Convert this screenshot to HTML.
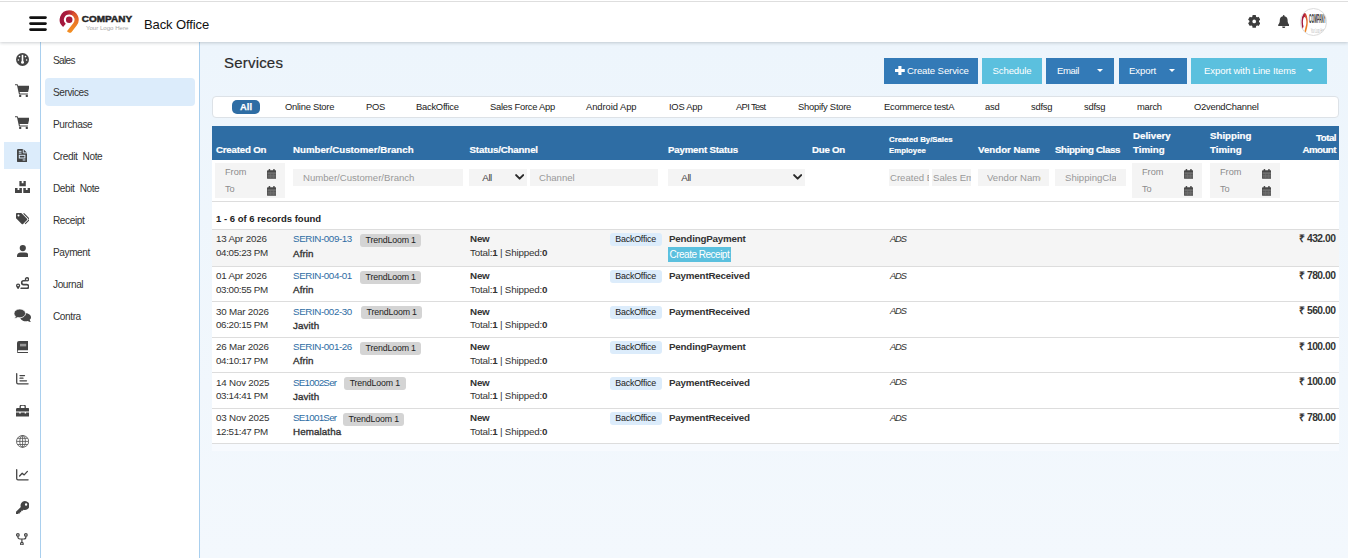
<!DOCTYPE html>
<html lang="en">
<head>
<meta charset="utf-8">
<title>Back Office - Services</title>
<style>
*{box-sizing:border-box;margin:0;padding:0}
html,body{width:1348px;height:558px;overflow:hidden}
body{font-family:"Liberation Sans",sans-serif;font-size:11px;color:#333;background:#eef5fc;position:relative}
.abs{position:absolute}
/* header */
#hdr{position:absolute;left:0;top:0;width:1348px;height:42px;background:#fff;box-shadow:0 1px 3px rgba(90,100,110,.3);z-index:5}
#hdr .title{position:absolute;left:144px;top:16.500px;font-size:13px;color:#111;letter-spacing:-.1px;line-height:16px;white-space:nowrap}
#burger{position:absolute;left:28.600px;top:15.800px;width:18px;height:16px}
#logo{position:absolute;left:58px;top:6px;width:80px;height:28px}
/* icon bar */
#ibar{position:absolute;left:0;top:42px;width:41px;height:516px;background:#fff;border-right:1px solid #a9cfee}
#ibar .ic{position:absolute;left:0;width:40px;height:32px}
#ibar .ic.on{background:#dcecfb;left:4px;width:36px}
#ibar svg{position:absolute;fill:#444}
/* sub menu */
#smenu{position:absolute;left:41px;top:42px;width:159px;height:516px;background:#fff;border-right:1px solid #a9cfee}
#smenu .it{position:absolute;left:12px;height:16px;line-height:16px;font-size:10.100px;color:#333;letter-spacing:-.42px;word-spacing:2.800px;white-space:nowrap}
#smenu .sel{position:absolute;left:4px;top:36px;width:150px;height:28px;background:#dcecfb;border-radius:4px}
/* main */
#main{position:absolute;left:200px;top:42px;width:1148px;height:516px;background:linear-gradient(#edf5fc,#f3f8fd)}
h1{position:absolute;left:224px;top:52.200px;font-size:15px;font-weight:normal;color:#2b2b2b;line-height:22px;letter-spacing:.2px;white-space:nowrap;-webkit-text-stroke:.2px #2b2b2b}
.btn{position:absolute;top:58px;height:25.800px;color:#fff;font-size:9.600px;letter-spacing:-.12px;line-height:26.500px;white-space:nowrap;text-align:center}
.btn.d{background:#337ab7}
.btn.l{background:#5bc0de}
.btn .car{position:absolute;top:11.200px;width:0;height:0;border-left:3px solid transparent;border-right:3px solid transparent;border-top:3.500px solid #fff}
/* tabs */
#tabs{position:absolute;left:212px;top:96px;width:1126.500px;height:22px;background:#fff;border:1px solid #dde2e7;border-radius:4px}
#tabs span{position:absolute;top:1.800px;letter-spacing:-.25px;font-size:9.400px;line-height:16px;color:#222;white-space:nowrap}
#tabs .all{left:19px;top:3px;width:28px;letter-spacing:0;-webkit-text-stroke:.25px #fff;height:14px;line-height:14px;background:#2e6da4;border-radius:5px;color:#fff;font-weight:bold;text-align:center}
/* table */
#tbl{position:absolute;left:212px;top:126px;width:1127px;height:318px;background:#fff}
#thead{position:absolute;left:0;top:0;width:1127px;height:34px;background:#2e6da4}
#thead span{position:absolute;color:#fff;font-weight:bold;-webkit-text-stroke:.2px #fff;font-size:9.7px;line-height:13px;white-space:nowrap}
.fl{position:absolute;background:#f4f4f4;color:#999;font-size:9.600px;white-space:nowrap;overflow:hidden}
.fl i{font-style:normal;position:absolute;font-size:9.200px}.fl.ft{color:#8c8c8c}
.hr{position:absolute;left:0;width:1127px;height:1px;background:#ddd}
.row{position:absolute;left:0;width:1127px}
.row span{position:absolute;white-space:nowrap;letter-spacing:-.2px;font-size:9.800px;line-height:14px;color:#333}
.row .lnk{color:#2e6da4;letter-spacing:-.4px}.row .lnk.s{letter-spacing:-.75px}.row .tm{letter-spacing:-.35px}
.row .b{font-weight:bold}
.row .tag{background:#d4d4d4;border-radius:3px;height:12.700px;line-height:12.700px;padding:0 5.500px;color:#222;font-size:8.800px;letter-spacing:-.15px}
.row .ch{background:#dcecfb;border-radius:3px;height:13px;line-height:13px;color:#222;font-size:8.9px;width:52px;text-align:center}
.row .ads{font-style:italic;font-size:9.300px;letter-spacing:-1.1px}
.row .amt{font-weight:bold;right:3.600px;text-align:right;font-size:10.300px;letter-spacing:-.5px}
.row .cr{background:#5bc0de;color:#fff;height:14.800px;line-height:16.400px;padding:0 0 0 1.500px;font-size:10px;letter-spacing:-.5px;width:62.800px;overflow:hidden}

.cal{width:9.400px;height:9.800px;display:block}
.fl span{position:absolute}
.chev{position:absolute;top:5.300px;width:9.300px;height:6.500px}
#thead .sm{font-size:7.8px;line-height:11.100px}
.rec{position:absolute;left:4px;top:85.800px;font-weight:bold;font-size:9.5px;line-height:14px;color:#222;white-space:nowrap}
.row .cu{-webkit-text-stroke:.35px #333;letter-spacing:.1px}
</style>
</head>
<body>
<div id="main"></div>
<div id="hdr"><div style="position:absolute;left:0;top:1px;width:1348px;height:1px;background:#dedede"></div>
  <svg id="burger" viewBox="0 0 18 16"><g stroke="#111" stroke-width="2.6" stroke-linecap="round"><line x1="1.5" y1="1.6" x2="16.5" y2="1.6"/><line x1="1.5" y1="7.6" x2="16.5" y2="7.6"/><line x1="1.5" y1="13.6" x2="16.5" y2="13.6"/></g></svg>
  <svg id="logo" viewBox="0 0 80 28">
    <defs><linearGradient id="lgA" gradientUnits="userSpaceOnUse" x1="3" y1="0" x2="16" y2="0"><stop offset="0" stop-color="#a2173e"/><stop offset=".45" stop-color="#a81b3c"/><stop offset="1" stop-color="#d5492e"/></linearGradient>
    <linearGradient id="lgB" gradientUnits="userSpaceOnUse" x1="0" y1="6" x2="0" y2="27"><stop offset="0" stop-color="#d5492e"/><stop offset=".45" stop-color="#ea7427"/><stop offset="1" stop-color="#f39122"/></linearGradient>
    <clipPath id="lgC"><rect x="0" y="0" width="30" height="26.800"/></clipPath></defs>
    <g fill="none" stroke-width="4.200" clip-path="url(#lgC)"><path d="M13.97 6.84A7.4 7.4 0 0 1 17.03 18.26L10.6 26.5" stroke="url(#lgB)"/><path d="M6.44 19.37A7.4 7.4 0 0 1 11.20 6.30A7.4 7.4 0 0 1 14.90 7.29" stroke="url(#lgA)"/></g>
    <circle cx="11.200" cy="13.700" r="3.250" fill="#a61a3d"/>
    <text x="23.800" y="16.400" font-family="Liberation Sans,sans-serif" font-weight="bold" font-size="9" fill="#262626" stroke="#262626" stroke-width=".45" textLength="50.300" lengthAdjust="spacingAndGlyphs">COMPANY</text>
    <text x="27.900" y="24" font-family="Liberation Sans,sans-serif" font-size="5.300" fill="#a8a8a8" textLength="42.500" lengthAdjust="spacingAndGlyphs">Your Logo Here</text>
  </svg>
  <span class="title">Back Office</span>
<svg style="position:absolute;left:1247.800px;top:15px" width="12.400" height="12.800" viewBox="0 0 13 13" preserveAspectRatio="none"><path d="M5.11 2.22L5.27 0.73L7.73 0.73L7.89 2.22L9.51 3.16L10.88 2.55L12.11 4.68L10.90 5.56L10.90 7.44L12.11 8.32L10.88 10.45L9.51 9.84L7.89 10.78L7.73 12.27L5.27 12.27L5.11 10.78L3.49 9.84L2.12 10.45L0.89 8.32L2.10 7.44L2.10 5.56L0.89 4.68L2.12 2.55L3.49 3.16z" fill="#3d3d3d" stroke="#3d3d3d" stroke-width="1.300" stroke-linejoin="round"/><circle cx="6.500" cy="6.500" r="1.900" fill="#fff"/></svg>
<svg style="position:absolute;left:1277.900px;top:14.800px" width="11.400" height="13" viewBox="0 0 11.400 13"><path fill="#3d3d3d" d="M5.700 0a.8.800 0 0 1 .8.800v.4a3.900 3.900 0 0 1 3.100 3.800c0 2.600.6 3.600 1.400 4.400.3.300.4.600.4.800 0 .5-.4.800-.8.800H.8c-.4 0-.8-.3-.8-.8 0-.2.100-.5.400-.8.800-.8 1.400-1.800 1.400-4.400a3.900 3.900 0 0 1 3.100-3.800V.8a.8.800 0 0 1 .8-.8z"/><path fill="#3d3d3d" d="M4.100 11.600h3.200a1.600 1.600 0 0 1-3.200 0z"/></svg>
<div style="position:absolute;left:1299.500px;top:8px;width:27.500px;height:27.500px;border-radius:50%;border:1px solid #dcdcdc;overflow:hidden;background:#fff"><svg style="position:absolute;left:0;top:0" width="26" height="27" viewBox="0 0 80 28" preserveAspectRatio="none"><g fill="none" stroke-width="4.200"><path d="M13.97 6.84A7.4 7.4 0 0 1 17.03 18.26L10.6 26.5" stroke="url(#lgB)"/><path d="M6.44 19.37A7.4 7.4 0 0 1 11.20 6.30A7.4 7.4 0 0 1 14.90 7.29" stroke="url(#lgA)"/></g><text x="25" y="15" font-family="Liberation Sans,sans-serif" font-weight="bold" font-size="12.500" fill="#2b2b2b" textLength="52" lengthAdjust="spacingAndGlyphs">COMPANY</text><text x="30" y="24.800" font-family="Liberation Sans,sans-serif" font-size="7.500" fill="#b5b5b5" textLength="42" lengthAdjust="spacingAndGlyphs">Your Logo Here</text></svg></div>
</div>
<div id="ibar"><div class="ic on" style="top:100px;height:27px"></div><svg style="left:15.5px;top:10.5px" width="13" height="13" viewBox="0 0 13 13"><circle cx="6.500" cy="6.500" r="6.500"/><g fill="#fff"><rect x="5.700" y="1.800" width="1.600" height="6.500"/><circle cx="6.500" cy="9.300" r="1.500"/><circle cx="2.400" cy="7" r=".8"/><circle cx="10.600" cy="7" r=".8"/><circle cx="3.500" cy="3.600" r=".8"/><circle cx="9.500" cy="3.600" r=".8"/></g></svg>
<svg style="left:14.7px;top:42.2px" width="14.6" height="13.2" viewBox="0 0 14.6 13.2"><path d="M0 .2h2.600l.5 1.500H14.600l-1.500 6.300H4.600l.3 1.400h8v1.100H4L2 1.300H0z"/><circle cx="5.200" cy="12" r="1.200"/><circle cx="11.800" cy="12" r="1.200"/></svg>
<svg style="left:14.7px;top:74.3px" width="14.6" height="13.2" viewBox="0 0 14.6 13.2"><path d="M0 .2h2.600l.5 1.500H14.600l-1.500 6.300H4.600l.3 1.400h8v1.100H4L2 1.300H0z"/><circle cx="5.200" cy="12" r="1.200"/><circle cx="11.800" cy="12" r="1.200"/></svg>
<svg style="left:17.2px;top:106.69999999999999px" width="10.2" height="13.3" viewBox="0 0 10.2 13.3"><path d="M1.200 0H6.300L10.200 3.900V12.100a1.200 1.200 0 0 1-1.200 1.200H1.200A1.200 1.200 0 0 1 0 12.100V1.200A1.200 1.200 0 0 1 1.200 0z"/><path d="M6.300 0v3.900h3.900" fill="none" stroke="#dcecfb" stroke-width=".9"/><g fill="none" stroke="#dcecfb" stroke-width="1"><rect x="2.300" y="6.300" width="5.600" height="2.700"/><path d="M1.800 2.300h2.700M1.800 4.100h2.700M5.700 11h2.700"/></g></svg>
<svg style="left:14.9px;top:138.8px" width="15.2" height="12.4" viewBox="0 0 15.2 12.4"><path d="M4.4 0h2.3000000000000003v2.200h1.800v-2.200h2.3000000000000003v5.3h-6.4z"/><path d="M0 6.9h2.5500000000000003v2.200h1.800v-2.200h2.5500000000000003v5.5h-6.9z"/><path d="M8.3 6.9h2.5500000000000003v2.200h1.800v-2.200h2.5500000000000003v5.5h-6.9z"/></svg>
<svg style="left:15.5px;top:171.2px" width="13.6" height="11.4" viewBox="0 0 13.6 11.4"><path fill-rule="evenodd" d="M0 .9V4.900a1 1 0 0 0 .3.700L5.700 11a1 1 0 0 0 1.400 0l3.900-3.900a1 1 0 0 0 0-1.400L5.600.3A1 1 0 0 0 4.900 0H.9A.9.900 0 0 0 0 .9zM2.500 1.500a1 1 0 1 1 0 2 1 1 0 0 1 0-2z"/><path d="M7.600.3l5.300 5.400a1 1 0 0 1 0 1.400L9.100 11" fill="none" stroke="#444" stroke-width="1.100"/></svg>
<svg style="left:16.6px;top:202.8px" width="11.6" height="12.6" viewBox="0 0 11.6 12.6"><circle cx="5.800" cy="3.100" r="3.100"/><path d="M0 12.600v-1.400a3.800 3.800 0 0 1 3.800-3.800h4a3.800 3.800 0 0 1 3.800 3.800v1.400z"/></svg>
<svg style="left:15.5px;top:234.89999999999998px" width="13.4" height="12.4" viewBox="0 0 13.4 12.4"><g fill="none" stroke="#444"><circle cx="11" cy="2.300" r="1.550" stroke-width="1.400"/><path d="M9.300 3.800H7.600a1.900 1.900 0 0 0 0 3.800h3.200a1.900 1.900 0 0 1 0 3.800H5.200" stroke-width="1.600" stroke-linecap="round"/></g><path fill-rule="evenodd" d="M2.100 6.400a2.100 2.100 0 0 1 2.100 2.100c0 1.400-2.100 3.900-2.100 3.900S0 9.900 0 8.500a2.100 2.100 0 0 1 2.100-2.100zm0 1.300a.8.800 0 1 0 0 1.600.8.800 0 0 0 0-1.600z"/></svg>
<svg style="left:13.5px;top:266.5px" width="17" height="13" viewBox="0 0 17 13"><path d="M11.600 4.200c3 0 5.400 1.800 5.400 4 0 1-.5 1.900-1.300 2.600.2.800.7 1.600 1.200 2.100-1.200 0-2.300-.4-3.100-1-.7.200-1.400.3-2.200.3-3 0-5.400-1.800-5.400-4s2.400-4 5.400-4z"/><path d="M5.800 0c3.200 0 5.800 2 5.800 4.400S9 8.800 5.800 8.800c-.8 0-1.500-.1-2.200-.3-.9.700-2.100 1.100-3.400 1.100.6-.6 1.100-1.400 1.300-2.300C.6 6.500 0 5.500 0 4.400 0 2 2.600 0 5.800 0z" stroke="#fff" stroke-width=".8"/></svg>
<svg style="left:16.6px;top:298.9px" width="11.6" height="12.4" viewBox="0 0 11.6 12.4"><path d="M2 0h8.600a1 1 0 0 1 1 1v10.400a1 1 0 0 1-1 1H2a2 2 0 0 1-2-2V2a2 2 0 0 1 2-2z"/><rect x="3" y="2.800" width="6.200" height="2.600" fill="#999"/><path d="M1.500 9.300h10.100v1.700H1.500a.85.850 0 0 1 0-1.700z" fill="#fff"/></svg>
<svg style="left:15.8px;top:331.3px" width="12.8" height="11.6" viewBox="0 0 12.8 11.6"><g fill="none" stroke="#444" stroke-width="1.300" stroke-linecap="round"><path d="M.7.700v8.800a1.300 1.300 0 0 0 1.300 1.300h10.100"/><path d="M4 2.600h4.500M4 5.200h3M4 7.800h6.500"/></g></svg>
<svg style="left:15.5px;top:363.2px" width="13.4" height="11.6" viewBox="0 0 13.4 11.6"><path d="M4.200 3V1.500A1.500 1.500 0 0 1 5.700 0h2A1.500 1.500 0 0 1 9.200 1.500V3" fill="none" stroke="#444" stroke-width="1.300"/><path d="M1.400 3h10.600a1.400 1.400 0 0 1 1.400 1.400V6.400H0V4.400A1.400 1.400 0 0 1 1.400 3zM0 7.600h3.300v1h1.400v-1h4v1h1.400v-1h3.300v4H0z"/></svg>
<svg style="left:15.5px;top:393px" width="13.2" height="12.8" viewBox="0 0 13.2 12.8"><g fill="none" stroke="#555" stroke-width=".85"><ellipse cx="6.600" cy="6.400" rx="6.100" ry="5.900"/><ellipse cx="6.600" cy="6.400" rx="2.800" ry="5.900"/><path d="M6.600.5v11.800M.5 6.400h12.200M1.500 3.300h10.200M1.500 9.500h10.200"/></g></svg>
<svg style="left:15.8px;top:427.2px" width="12.8" height="11.6" viewBox="0 0 12.8 11.6"><g fill="none" stroke="#444" stroke-width="1.300" stroke-linecap="round" stroke-linejoin="round"><path d="M.7.700v8.800a1.300 1.300 0 0 0 1.300 1.300h10.100"/><path d="M3.600 7l2.600-2.800 2 1.700 3.200-3.500"/></g></svg>
<svg style="left:15.5px;top:458.5px" width="13.4" height="13" viewBox="0 0 13.4 13"><path fill-rule="evenodd" d="M8.900 0a4.500 4.500 0 1 1-1.300 8.800L6.600 9.800H5.200v1.400H3.800v1.400H2.400L1.800 13H0v-2.200L4.800 6A4.500 4.500 0 0 1 8.900 0zm1.200 2.300a1.200 1.200 0 1 0 0 2.400 1.200 1.200 0 0 0 0-2.400z"/></svg>
<svg style="left:16.4px;top:490.70000000000005px" width="11.8" height="12.6" viewBox="0 0 11.8 12.6"><g fill="none" stroke="#444" stroke-width="1.200"><circle cx="1.900" cy="1.900" r="1.300"/><circle cx="9.900" cy="1.900" r="1.300"/><circle cx="5.900" cy="10.700" r="1.300"/><path d="M1.900 3.200v.8a2 2 0 0 0 2 2h4a2 2 0 0 0 2-2v-.8M5.900 6v3.400"/></g></svg></div>
<div id="smenu">
  <div class="sel"></div>
  <span class="it" style="top:10.6px;letter-spacing:-.7px">Sales</span>
  <span class="it" style="top:42.6px">Services</span>
  <span class="it" style="top:74.6px">Purchase</span>
  <span class="it" style="top:106.6px">Credit Note</span>
  <span class="it" style="top:138.6px">Debit Note</span>
  <span class="it" style="top:170.6px">Receipt</span>
  <span class="it" style="top:202.6px">Payment</span>
  <span class="it" style="top:234.6px">Journal</span>
  <span class="it" style="top:266.6px">Contra</span>
</div>
<h1>Services</h1>
<div class="btn d" style="left:884px;width:94px"><svg style="position:absolute;left:10.800px;top:8px" width="9.800" height="9" viewBox="0 0 10 10" preserveAspectRatio="none"><path d="M3.400 0h3.200v3.400H10v3.200H6.600V10H3.400V6.600H0V3.400h3.400z" fill="#fff"/></svg><span style="position:absolute;left:23px;top:0">Create Service</span></div>
<div class="btn l" style="left:982px;width:60px">Schedule</div>
<div class="btn d" style="left:1046px;width:68px"><span style="position:absolute;left:11px;top:0;letter-spacing:-.4px">Email</span><i class="car" style="left:51px"></i></div>
<div class="btn d" style="left:1119px;width:68px"><span style="position:absolute;left:10px;top:0">Export</span><i class="car" style="left:50px"></i></div>
<div class="btn l" style="left:1191px;width:136px"><span style="position:absolute;left:13px;top:0">Export with Line Items</span><i class="car" style="left:116px"></i></div>
<div id="tabs"><span class="all">All</span><span style="left:72px">Online Store</span><span style="left:153px">POS</span><span style="left:203px">BackOffice</span><span style="left:277px">Sales Force App</span><span style="left:373px;letter-spacing:-.05px">Android App</span><span style="left:456px">IOS App</span><span style="left:523px;letter-spacing:-.65px">API Test</span><span style="left:585px">Shopify Store</span><span style="left:671px">Ecommerce testA</span><span style="left:772px">asd</span><span style="left:818px">sdfsg</span><span style="left:871px">sdfsg</span><span style="left:924px">march</span><span style="left:981px">O2vendChannel</span></div>
<div style="position:absolute;left:212px;top:444px;width:1127px;height:7px;background:#f7fafe"></div>
<div id="tbl">
<div id="thead">
<span style="left:4px;top:17px;letter-spacing:-.2px">Created On</span>
<span style="left:81px;top:17px">Number/Customer/Branch</span>
<span style="left:257.500px;top:17px;letter-spacing:-.15px">Status/Channel</span>
<span style="left:456px;top:17px;letter-spacing:-.2px">Payment Status</span>
<span style="left:600px;top:17px;letter-spacing:-.25px">Due On</span>
<span class="sm" style="left:677px;top:8px">Created By/Sales<br>Employee</span>
<span style="left:766px;top:17px">Vendor Name</span>
<span style="left:843px;top:17px;letter-spacing:-.35px">Shipping Class</span>
<span style="left:921px;top:3px;line-height:14px">Delivery<br>Timing</span>
<span style="left:998px;top:3px;line-height:14px">Shipping<br>Timing</span>
<span style="right:3px;top:6px;line-height:12.300px;text-align:right;letter-spacing:-.5px">Total<br>Amount</span>
</div>
<div class="fl ft" style="left:3px;top:37px;width:70px;height:35px"><i style="left:10px;top:4px">From</i><i style="left:10px;top:21px">To</i><span style="left:52px;top:6px"><svg class="cal" viewBox="0 0 9.400 9.800"><path d="M.9 1.300h7.600a.9.900 0 0 1 .9.900v6.700a.9.900 0 0 1-.9.900H.9a.9.900 0 0 1-.9-.9V2.200a.9.900 0 0 1 .9-.9z" fill="#484848"/><rect x="1.700" y="0" width="1.500" height="2.200" rx=".5" fill="#484848"/><rect x="6.200" y="0" width="1.500" height="2.200" rx=".5" fill="#484848"/><g fill="#a9a9a9"><rect x=".5" y="3.700" width="8.400" height=".7"/><rect x=".5" y="5.800" width="8.400" height=".55"/><rect x=".5" y="7.700" width="8.400" height=".55"/></g><g fill="#777"><rect x="3" y="4.400" width=".45" height="4.800"/><rect x="5.950" y="4.400" width=".45" height="4.800"/></g></svg></span><span style="left:52px;top:23px"><svg class="cal" viewBox="0 0 9.400 9.800"><path d="M.9 1.300h7.600a.9.900 0 0 1 .9.900v6.700a.9.900 0 0 1-.9.900H.9a.9.900 0 0 1-.9-.9V2.200a.9.900 0 0 1 .9-.9z" fill="#484848"/><rect x="1.700" y="0" width="1.500" height="2.200" rx=".5" fill="#484848"/><rect x="6.200" y="0" width="1.500" height="2.200" rx=".5" fill="#484848"/><g fill="#a9a9a9"><rect x=".5" y="3.700" width="8.400" height=".7"/><rect x=".5" y="5.800" width="8.400" height=".55"/><rect x=".5" y="7.700" width="8.400" height=".55"/></g><g fill="#777"><rect x="3" y="4.400" width=".45" height="4.800"/><rect x="5.950" y="4.400" width=".45" height="4.800"/></g></svg></span></div>
<div class="fl" style="left:81px;top:43px;width:170px;height:17px;line-height:17px;padding-left:10px">Number/Customer/Branch</div>
<div class="fl" style="left:257px;top:43px;width:58px;height:17px;line-height:17px;padding-left:13.300px;color:#444;font-size:9.800px;letter-spacing:-.45px">All<svg class="chev" style="left:45.500px" viewBox="0 0 10 7"><path d="M1.200 1.200L5 5l3.800-3.800" fill="none" stroke="#2b2b2b" stroke-width="2.200" stroke-linecap="round" stroke-linejoin="round"/></svg></div>
<div class="fl" style="left:318px;top:43px;width:128px;height:17px;line-height:17px;padding-left:9px">Channel</div>
<div class="fl" style="left:456px;top:43px;width:137px;height:17px;line-height:17px;padding-left:13.300px;color:#444;font-size:9.800px;letter-spacing:-.45px">All<svg class="chev" style="left:124.500px" viewBox="0 0 10 7"><path d="M1.200 1.200L5 5l3.800-3.800" fill="none" stroke="#2b2b2b" stroke-width="2.200" stroke-linecap="round" stroke-linejoin="round"/></svg></div>
<div class="fl" style="left:677px;top:43px;width:40px;height:17px;line-height:17px;padding-left:1px">Created By</div>
<div class="fl" style="left:720px;top:43px;width:39px;height:17px;line-height:17px;padding-left:1px">Sales Employee</div>
<div class="fl" style="left:766px;top:43px;width:71px;height:17px;line-height:17px;padding-left:9px"><div style="width:54px;overflow:hidden">Vendor Name</div></div>
<div class="fl" style="left:843px;top:43px;width:71px;height:17px;line-height:17px;padding-left:10px"><div style="width:51px;overflow:hidden">ShippingClass</div></div>
<div class="fl ft" style="left:920px;top:37px;width:70px;height:35px"><i style="left:10px;top:4px">From</i><i style="left:10px;top:21px">To</i><span style="left:52px;top:6px"><svg class="cal" viewBox="0 0 9.400 9.800"><path d="M.9 1.300h7.600a.9.900 0 0 1 .9.900v6.700a.9.900 0 0 1-.9.900H.9a.9.900 0 0 1-.9-.9V2.200a.9.900 0 0 1 .9-.9z" fill="#484848"/><rect x="1.700" y="0" width="1.500" height="2.200" rx=".5" fill="#484848"/><rect x="6.200" y="0" width="1.500" height="2.200" rx=".5" fill="#484848"/><g fill="#a9a9a9"><rect x=".5" y="3.700" width="8.400" height=".7"/><rect x=".5" y="5.800" width="8.400" height=".55"/><rect x=".5" y="7.700" width="8.400" height=".55"/></g><g fill="#777"><rect x="3" y="4.400" width=".45" height="4.800"/><rect x="5.950" y="4.400" width=".45" height="4.800"/></g></svg></span><span style="left:52px;top:23px"><svg class="cal" viewBox="0 0 9.400 9.800"><path d="M.9 1.300h7.600a.9.900 0 0 1 .9.900v6.700a.9.900 0 0 1-.9.900H.9a.9.900 0 0 1-.9-.9V2.200a.9.900 0 0 1 .9-.9z" fill="#484848"/><rect x="1.700" y="0" width="1.500" height="2.200" rx=".5" fill="#484848"/><rect x="6.200" y="0" width="1.500" height="2.200" rx=".5" fill="#484848"/><g fill="#a9a9a9"><rect x=".5" y="3.700" width="8.400" height=".7"/><rect x=".5" y="5.800" width="8.400" height=".55"/><rect x=".5" y="7.700" width="8.400" height=".55"/></g><g fill="#777"><rect x="3" y="4.400" width=".45" height="4.800"/><rect x="5.950" y="4.400" width=".45" height="4.800"/></g></svg></span></div>
<div class="fl ft" style="left:998px;top:37px;width:70px;height:35px"><i style="left:10px;top:4px">From</i><i style="left:10px;top:21px">To</i><span style="left:52px;top:6px"><svg class="cal" viewBox="0 0 9.400 9.800"><path d="M.9 1.300h7.600a.9.900 0 0 1 .9.900v6.700a.9.900 0 0 1-.9.900H.9a.9.900 0 0 1-.9-.9V2.200a.9.900 0 0 1 .9-.9z" fill="#484848"/><rect x="1.700" y="0" width="1.500" height="2.200" rx=".5" fill="#484848"/><rect x="6.200" y="0" width="1.500" height="2.200" rx=".5" fill="#484848"/><g fill="#a9a9a9"><rect x=".5" y="3.700" width="8.400" height=".7"/><rect x=".5" y="5.800" width="8.400" height=".55"/><rect x=".5" y="7.700" width="8.400" height=".55"/></g><g fill="#777"><rect x="3" y="4.400" width=".45" height="4.800"/><rect x="5.950" y="4.400" width=".45" height="4.800"/></g></svg></span><span style="left:52px;top:23px"><svg class="cal" viewBox="0 0 9.400 9.800"><path d="M.9 1.300h7.600a.9.900 0 0 1 .9.900v6.700a.9.900 0 0 1-.9.900H.9a.9.900 0 0 1-.9-.9V2.200a.9.900 0 0 1 .9-.9z" fill="#484848"/><rect x="1.700" y="0" width="1.500" height="2.200" rx=".5" fill="#484848"/><rect x="6.200" y="0" width="1.500" height="2.200" rx=".5" fill="#484848"/><g fill="#a9a9a9"><rect x=".5" y="3.700" width="8.400" height=".7"/><rect x=".5" y="5.800" width="8.400" height=".55"/><rect x=".5" y="7.700" width="8.400" height=".55"/></g><g fill="#777"><rect x="3" y="4.400" width=".45" height="4.800"/><rect x="5.950" y="4.400" width=".45" height="4.800"/></g></svg></span></div>
<div class="hr" style="top:75px"></div>
<span class="rec">1 - 6 of 6 records found</span>
<div class="hr" style="top:103px"></div>
<!--rows-->
<div class="row" style="top:104px;height:35.8px;background:#f5f5f5;">
<span style="left:4px;top:2.4px">13 Apr 2026</span><span class="tm" style="left:4px;top:16px">04:05:23 PM</span>
<span class="lnk" style="left:81px;top:2.4px">SERIN-009-13</span><span class="tag" style="left:148px;top:4.1px">TrendLoom 1</span><span class="cu" style="left:81px;top:16.5px">Afrin</span>
<span class="b" style="left:258px;top:2.4px">New</span><span style="left:258px;top:16px">Total:<b>1</b> | Shipped:<b>0</b></span>
<span class="ch" style="left:397.600px;top:3.3px">BackOffice</span><span class="b" style="left:457px;top:2.4px">PendingPayment</span>
<span class="cr" style="left:456px;top:17.3px">Create Receipt</span>
<span class="ads" style="left:678px;top:1.9px">ADS</span><span class="amt" style="top:1.9px">₹ 432.00</span>
<div class="hr" style="top:35.8px"></div></div>
<div class="row" style="top:140.8px;height:34.5px;">
<span style="left:4px;top:2.4px">01 Apr 2026</span><span class="tm" style="left:4px;top:16px">03:00:55 PM</span>
<span class="lnk" style="left:81px;top:2.4px">SERIN-004-01</span><span class="tag" style="left:148px;top:4.1px">TrendLoom 1</span><span class="cu" style="left:81px;top:16.5px">Afrin</span>
<span class="b" style="left:258px;top:2.4px">New</span><span style="left:258px;top:16px">Total:<b>1</b> | Shipped:<b>0</b></span>
<span class="ch" style="left:397.600px;top:3.3px">BackOffice</span><span class="b" style="left:457px;top:2.4px">PaymentReceived</span>
<span class="ads" style="left:678px;top:1.9px">ADS</span><span class="amt" style="top:1.9px">₹ 780.00</span>
<div class="hr" style="top:34.5px"></div></div>
<div class="row" style="top:176.3px;height:34.5px;">
<span style="left:4px;top:2.4px">30 Mar 2026</span><span class="tm" style="left:4px;top:16px">06:20:15 PM</span>
<span class="lnk" style="left:81px;top:2.4px">SERIN-002-30</span><span class="tag" style="left:149px;top:4.1px">TrendLoom 1</span><span class="cu" style="left:81px;top:16.5px">Javith</span>
<span class="b" style="left:258px;top:2.4px">New</span><span style="left:258px;top:16px">Total:<b>1</b> | Shipped:<b>0</b></span>
<span class="ch" style="left:397.600px;top:3.3px">BackOffice</span><span class="b" style="left:457px;top:2.4px">PaymentReceived</span>
<span class="ads" style="left:678px;top:1.9px">ADS</span><span class="amt" style="top:1.9px">₹ 560.00</span>
<div class="hr" style="top:34.5px"></div></div>
<div class="row" style="top:211.8px;height:34.5px;">
<span style="left:4px;top:2.4px">26 Mar 2026</span><span class="tm" style="left:4px;top:16px">04:10:17 PM</span>
<span class="lnk" style="left:81px;top:2.4px">SERIN-001-26</span><span class="tag" style="left:148px;top:4.1px">TrendLoom 1</span><span class="cu" style="left:81px;top:16.5px">Afrin</span>
<span class="b" style="left:258px;top:2.4px">New</span><span style="left:258px;top:16px">Total:<b>1</b> | Shipped:<b>0</b></span>
<span class="ch" style="left:397.600px;top:3.3px">BackOffice</span><span class="b" style="left:457px;top:2.4px">PendingPayment</span>
<span class="ads" style="left:678px;top:1.9px">ADS</span><span class="amt" style="top:1.9px">₹ 100.00</span>
<div class="hr" style="top:34.5px"></div></div>
<div class="row" style="top:247.3px;height:34.5px;">
<span style="left:4px;top:2.4px">14 Nov 2025</span><span class="tm" style="left:4px;top:16px">03:14:41 PM</span>
<span class="lnk s" style="left:81px;top:2.4px">SE1002Ser</span><span class="tag" style="left:132.2px;top:4.1px">TrendLoom 1</span><span class="cu" style="left:81px;top:16.5px">Javith</span>
<span class="b" style="left:258px;top:2.4px">New</span><span style="left:258px;top:16px">Total:<b>1</b> | Shipped:<b>0</b></span>
<span class="ch" style="left:397.600px;top:3.3px">BackOffice</span><span class="b" style="left:457px;top:2.4px">PaymentReceived</span>
<span class="ads" style="left:678px;top:1.9px">ADS</span><span class="amt" style="top:1.9px">₹ 100.00</span>
<div class="hr" style="top:34.5px"></div></div>
<div class="row" style="top:282.8px;height:34.5px;">
<span style="left:4px;top:2.4px">03 Nov 2025</span><span class="tm" style="left:4px;top:16px">12:51:47 PM</span>
<span class="lnk s" style="left:81px;top:2.4px">SE1001Ser</span><span class="tag" style="left:131.1px;top:4.1px">TrendLoom 1</span><span class="cu" style="left:81px;top:16.5px">Hemalatha</span>
<span class="b" style="left:258px;top:2.4px">New</span><span style="left:258px;top:16px">Total:<b>1</b> | Shipped:<b>0</b></span>
<span class="ch" style="left:397.600px;top:3.3px">BackOffice</span><span class="b" style="left:457px;top:2.4px">PaymentReceived</span>
<span class="ads" style="left:678px;top:1.9px">ADS</span><span class="amt" style="top:1.9px">₹ 780.00</span>
<div class="hr" style="top:34.5px"></div></div>
<!--/rows-->
</div>

</body>
</html>
